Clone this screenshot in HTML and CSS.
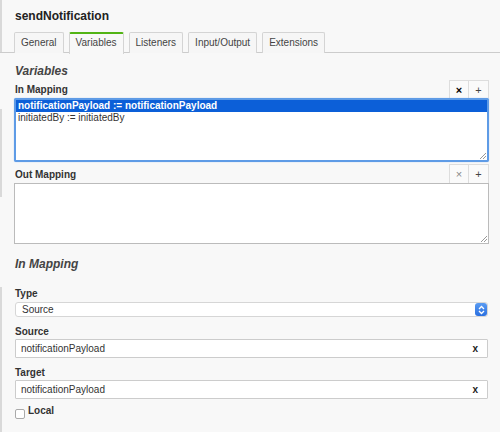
FILE: index.html
```html
<!DOCTYPE html>
<html>
<head>
<meta charset="utf-8">
<link rel="stylesheet" href="styles.css">
</head>
<body>
<div class="panel">
  <div class="title">sendNotification</div>
  <div class="tabs">
    <div class="tab">General</div>
    <div class="tab active">Variables</div>
    <div class="tab">Listeners</div>
    <div class="tab">Input/Output</div>
    <div class="tab">Extensions</div>
  </div>
  <div class="content">
    <div class="heading">Variables</div>

    <div class="list-head">
      <span class="label">In Mapping</span>
      <div class="btns"><span class="btn strong">×</span><span class="btn">+</span></div>
    </div>
    <div class="list focused">
      <div class="opt selected">notificationPayload := notificationPayload</div>
      <div class="opt">initiatedBy := initiatedBy</div>
      <span class="grip"></span>
    </div>

    <div class="list-head out">
      <span class="label">Out Mapping</span>
      <div class="btns"><span class="btn light">×</span><span class="btn">+</span></div>
    </div>
    <div class="list plain">
      <span class="grip"></span>
    </div>

    <div class="heading second">In Mapping</div>

    <div class="field-label type-label">Type</div>
    <div class="select">
      <span>Source</span>
      <span class="stepper">
        <svg width="7" height="10" viewBox="0 0 7 10"><path d="M1 4 L3.5 1.5 L6 4 M1 6 L3.5 8.5 L6 6" fill="none" stroke="#fff" stroke-width="1.3"/></svg>
      </span>
    </div>

    <div class="field-label">Source</div>
    <div class="input"><span>notificationPayload</span><span class="clear">x</span></div>

    <div class="field-label">Target</div>
    <div class="input"><span>notificationPayload</span><span class="clear">x</span></div>

    <div class="check-row">
      <span class="checkbox"></span><span class="check-label">Local</span>
    </div>
  </div>
</div>
</body>
</html>
```
FILE: styles.css
```css
* { box-sizing: border-box; }
html, body { margin: 0; padding: 0; }
body {
  background: #f8f8f8;
  font-family: "Liberation Sans", Arial, Helvetica, sans-serif;
  color: #333;
  width: 500px;
  height: 432px;
  overflow: hidden;
}
.panel {
  height: 432px;
  background-image: linear-gradient(to bottom, #d9d9d9 0, #d9d9d9 52px, transparent 52px, transparent 109px, #d9d9d9 109px, #d9d9d9 197px, transparent 197px, transparent 287px, #d9d9d9 287px);
  background-size: 2px 100%;
  background-repeat: no-repeat;
}
.title {
  font-size: 12px;
  font-weight: bold;
  color: #222;
  padding: 9px 0 0 15px;
  line-height: 14px;
  height: 32px;
}
.tabs {
  display: flex;
  gap: 5px;
  padding-left: 14px;
  border-bottom: 1px solid #ccc;
  height: 21px;
}
.tab {
  font-size: 10px;
  line-height: 19px;
  height: 21px;
  padding: 0 6px;
  border: 1px solid #d4d4d4;
  border-bottom: none;
  border-radius: 2px 2px 0 0;
  background: #f6f6f6;
  color: #444;
}
.tab.active {
  border-top: 2px solid #52b415;
  line-height: 18px;
  background: #f8f8f8;
  height: 22px;
  padding: 0 6px;
}
.content {
  padding: 0 12px 0 15px;
}
.heading {
  font-size: 12px;
  font-weight: bold;
  font-style: italic;
  color: #444;
  line-height: 14px;
  margin-top: 11px;
}
.heading.second { margin-top: 13px; }
.list-head {
  display: flex;
  justify-content: space-between;
  align-items: flex-end;
  height: 18px;
  margin-top: 2px;
}
.list-head.out { margin-top: 2px; height: 19px; }
.label {
  font-size: 10px;
  font-weight: bold;
  color: #333;
  line-height: 12px;
  padding-bottom: 2px;
}
.btns { display: flex; height: 100%; margin-right: -1px; }
.btn {
  width: 20px;
  height: 100%;
  display: flex;
  align-items: center;
  justify-content: center;
  background: #fafafa;
  border: 1px solid #ddd;
  border-bottom: none;
  font-size: 11px;
  color: #444;
}
.btn + .btn { border-left: none; }
.btn.strong { color: #000; font-weight: bold; }
.btn.light { color: #888; }
.list {
  position: relative;
  background: #fff;
  margin-left: -1px;
  margin-right: -1px;
}
.list.focused {
  height: 64px;
  border: 2px solid #5e9be6;
  border-radius: 2px;
  box-shadow: 0 0 1px #7fb0ee;
}
.list.plain {
  height: 61px;
  border: 1px solid #bbb;
}
.opt {
  font-size: 10px;
  line-height: 12px;
  height: 12px;
  padding-left: 2px;
  color: #333;
}
.opt.selected {
  background: #0c5fd8;
  color: #fff;
  font-weight: bold;
}
.grip {
  position: absolute;
  right: 1px;
  bottom: 1px;
  width: 6px;
  height: 6px;
  background: linear-gradient(135deg, transparent 0 45%, #999 45% 55%, transparent 55% 70%, #999 70% 80%, transparent 80%);
}
.field-label {
  font-size: 10px;
  font-weight: bold;
  color: #333;
  line-height: 12px;
  margin-top: 9px;
  margin-bottom: 1px;
}
.type-label { margin-top: 17px; margin-bottom: 2px; }
.select {
  height: 15px;
  background: #fff;
  border: 1px solid #d6d6d6;
  border-radius: 3px;
  display: flex;
  align-items: center;
  justify-content: space-between;
  font-size: 10px;
  padding-left: 6px;
  color: #333;
}
.stepper {
  width: 12px;
  height: 13px;
  background: linear-gradient(#5a9cf2, #2a6fe0);
  border-radius: 3px;
  display: flex;
  align-items: center;
  justify-content: center;
}
.input {
  height: 19px;
  background: #fff;
  border: 1px solid #ccc;
  border-radius: 1px;
  display: flex;
  align-items: center;
  justify-content: space-between;
  font-size: 10px;
  color: #333;
  padding: 0 9px 0 5px;
}
.clear { font-size: 10px; font-weight: bold; color: #222; }
.check-row {
  display: flex;
  align-items: flex-start;
  margin-top: 6px;
}
.checkbox {
  width: 10px;
  height: 10px;
  background: #fff;
  border: 1px solid #aaa;
  border-radius: 2px;
  margin-top: 4px;
}
.check-label {
  font-size: 10px;
  font-weight: bold;
  color: #333;
  margin-left: 3px;
  line-height: 12px;
}
```
